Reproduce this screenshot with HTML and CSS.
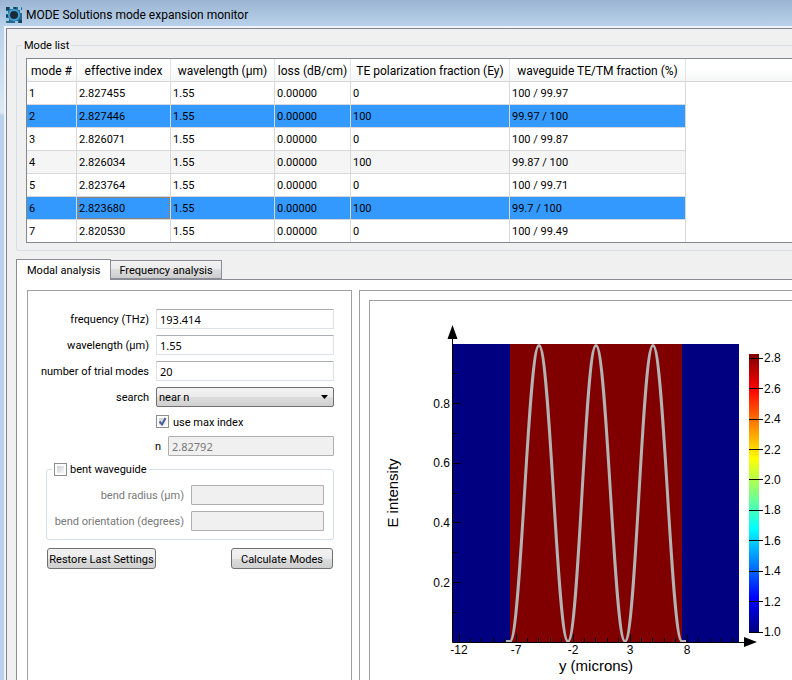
FILE: index.html
```
<!DOCTYPE html>
<html lang="en">
<head>
    <meta charset="UTF-8">
    <meta name="viewport" content="width=device-width, initial-scale=1.0">
    <title>MODE Solutions mode expansion monitor</title>
    <link rel="stylesheet" href="styles.css">
</head>
<body>
    <header class="titlebar">
        <svg class="app-icon" width="16" height="16" viewBox="0 0 16 16">
            <rect width="16" height="16" rx="1" fill="#2a6790"/>
            <path d="M0 4h2v3H0zM14 3h2v3h-2zM4 0h3v2H4zM9 14h3v2H9zM0 11h3v3H0zM12 0h3v3h-3z" fill="#9cc6e2"/>
            <path d="M0 0h3v3H0zM13 13h3v3h-3zM8 0h2v2H8zM0 8h2v2H0z" fill="#163f5c"/>
            <circle cx="8" cy="8" r="6" fill="#3fa0d2"/>
            <circle cx="8" cy="8" r="4" fill="#1b2a36"/>
        </svg>
        <span class="title-text">MODE Solutions mode expansion monitor</span>
    </header>

    <main class="window">
        <fieldset class="group mode-list">
            <legend>Mode list</legend>
            <div class="table-frame">
                <table>
                    <colgroup>
                        <col class="c-mode"><col class="c-index"><col class="c-wave"><col class="c-loss"><col class="c-te"><col class="c-wg"><col>
                    </colgroup>
                    <thead>
                        <tr><th>mode #</th><th>effective index</th><th>wavelength (µm)</th><th>loss (dB/cm)</th><th>TE polarization fraction (Ey)</th><th>waveguide TE/TM fraction (%)</th><th></th></tr>
                    </thead>
                    <tbody>
                        <tr><td>1</td><td>2.827455</td><td>1.55</td><td>0.00000</td><td>0</td><td>100 / 99.97</td><td></td></tr>
                        <tr class="selected"><td>2</td><td>2.827446</td><td>1.55</td><td>0.00000</td><td>100</td><td>99.97 / 100</td><td></td></tr>
                        <tr><td>3</td><td>2.826071</td><td>1.55</td><td>0.00000</td><td>0</td><td>100 / 99.87</td><td></td></tr>
                        <tr><td>4</td><td>2.826034</td><td>1.55</td><td>0.00000</td><td>100</td><td>99.87 / 100</td><td></td></tr>
                        <tr><td>5</td><td>2.823764</td><td>1.55</td><td>0.00000</td><td>0</td><td>100 / 99.71</td><td></td></tr>
                        <tr class="selected"><td>6</td><td class="current"><span>2.823680</span></td><td>1.55</td><td>0.00000</td><td>100</td><td>99.7 / 100</td><td></td></tr>
                        <tr><td>7</td><td>2.820530</td><td>1.55</td><td>0.00000</td><td>0</td><td>100 / 99.49</td><td></td></tr>
                    </tbody>
                </table>
            </div>
        </fieldset>

        <nav class="tabs">
            <button class="tab active" type="button">Modal analysis</button>
            <button class="tab" type="button">Frequency analysis</button>
        </nav>

        <section class="pane">
            <form class="settings">
                <div class="row">
                    <label for="frequency">frequency (THz)</label>
                    <input type="text" id="frequency" value="193.414">
                </div>
                <div class="row">
                    <label for="wavelength">wavelength (µm)</label>
                    <input type="text" id="wavelength" value="1.55">
                </div>
                <div class="row">
                    <label for="trials">number of trial modes</label>
                    <input type="text" id="trials" value="20">
                </div>
                <div class="row">
                    <label for="search">search</label>
                    <select id="search">
                        <option>near n</option>
                    </select>
                </div>
                <div class="row check-row">
                    <input type="checkbox" id="maxIndex" checked>
                    <label for="maxIndex">use max index</label>
                </div>
                <div class="row n-row">
                    <label for="n">n</label>
                    <input type="text" id="n" value="2.82792" disabled>
                </div>
                <fieldset class="group bent">
                    <legend>
                        <input type="checkbox" id="bent">
                        <label for="bent">bent waveguide</label>
                    </legend>
                    <div class="row">
                        <label for="radius">bend radius (µm)</label>
                        <input type="text" id="radius" disabled>
                    </div>
                    <div class="row">
                        <label for="orientation">bend orientation (degrees)</label>
                        <input type="text" id="orientation" disabled>
                    </div>
                </fieldset>
                <div class="actions">
                    <button type="button" class="restore">Restore Last Settings</button>
                    <button type="button" class="calculate">Calculate Modes</button>
                </div>
            </form>

            <div class="plot-panel">
                <div class="plot">
                    <svg width="422" height="378" viewBox="0 0 422 378">
                        <defs>
                            <linearGradient id="jet" x1="0" y1="0" x2="0" y2="1">
                                <stop offset="0" stop-color="#800000"/>
                                <stop offset="0.125" stop-color="#f00"/>
                                <stop offset="0.375" stop-color="#ff0"/>
                                <stop offset="0.625" stop-color="#0ff"/>
                                <stop offset="0.875" stop-color="#00f"/>
                                <stop offset="1" stop-color="#000080"/>
                            </linearGradient>
                        </defs>
                        <!-- index regions -->
                        <rect x="83" y="43" width="286" height="298" fill="#000080"/>
                        <rect x="140" y="43" width="172" height="298" fill="#800000"/>
                        <!-- E intensity -->
                        <path d="M136 340.500h4c11 0 18-296 29-296s18 296 29 296s17-296 28-296s18 296 29 296s17-296 28-296s18 296 29 296h4" fill="none" stroke="#b3b3b3" stroke-width="3"/>
                        <!-- axes -->
                        <path d="M82.500 30V341.500H376" fill="none" stroke="#000"/>
                        <path d="M82.500 24l5 14h-10zM387 341l-13-5v10z"/>
                        <path d="M83 102.500h8M83 162.500h8M83 221.500h8M83 281.500h8M83 72.500h4M83 132.500h4M83 192.500h4M83 251.500h4M83 311.500h4" stroke="#000"/>
                        <path d="M89.500 341v-8M146.500 341v-8M203.500 341v-8M260.500 341v-8M317.500 341v-8" stroke="#000"/>
                        <path d="M100.500 341v-4M111.500 341v-4M123.500 341v-4M134.500 341v-4M157.500 341v-4M168.500 341v-4M180.500 341v-4M191.500 341v-4M214.500 341v-4M225.500 341v-4M237.500 341v-4M248.500 341v-4M271.500 341v-4M282.500 341v-4M294.500 341v-4M305.500 341v-4M328.500 341v-4M340.500 341v-4M351.500 341v-4M362.500 341v-4" stroke="#000"/>
                        <!-- colour bar -->
                        <rect x="379" y="53" width="10" height="279" fill="url(#jet)"/>
                        <path d="M379 57.500h14M379 87.500h14M379 118.500h14M379 148.500h14M379 178.500h14M379 209.500h14M379 239.500h14M379 270.500h14M379 300.500h14M379 331.500h14" stroke="#000"/>
                        <g class="scale">
                            <text x="394" y="61">2.8</text>
                            <text x="394" y="92">2.6</text>
                            <text x="394" y="122">2.4</text>
                            <text x="394" y="153">2.2</text>
                            <text x="394" y="183">2.0</text>
                            <text x="394" y="213">1.8</text>
                            <text x="394" y="244">1.6</text>
                            <text x="394" y="274">1.4</text>
                            <text x="394" y="305">1.2</text>
                            <text x="394" y="335">1.0</text>
                        </g>
                        <g class="scale y-scale">
                            <text x="80" y="107">0.8</text>
                            <text x="80" y="166">0.6</text>
                            <text x="80" y="226">0.4</text>
                            <text x="80" y="286">0.2</text>
                        </g>
                        <g class="scale x-scale">
                            <text x="89" y="353">-12</text>
                            <text x="146" y="353">-7</text>
                            <text x="203" y="353">-2</text>
                            <text x="260" y="353">3</text>
                            <text x="317" y="353">8</text>
                        </g>
                        <text class="axis-title" x="226" y="370">y (microns)</text>
                        <text class="axis-title" transform="translate(28 192) rotate(-90)">E intensity</text>
                    </svg>
                </div>
            </div>
        </section>
    </main>
</body>
</html>
```
FILE: styles.css
```
* {
    box-sizing: border-box;
}
body {
    margin: 0;
    height: 100vh;
    display: flex;
    flex-direction: column;
    overflow: hidden;
    background: linear-gradient(#9ab4d2, #b9d1ea 26px, #dce9f6 112px, #b9d1ea 116px);
    font-family: Roboto, "Noto Sans", sans-serif;
    font-size: 11px;
    line-height: 14px;
    color: #000;
}
input, select, button {
    font: inherit;
    color: inherit;
    margin: 0;
}
.titlebar {
    flex: none;
    display: flex;
    align-items: center;
    gap: 4px;
    height: 26px;
    padding: 3px 6px 0;
}
.title-text {
    font-size: 12px;
}
.window {
    flex: 1;
    min-height: 0;
    display: flex;
    flex-direction: column;
    margin: 2px 0 0 6px;
    padding: 9px 0 0 9px;
    background: #f0f0f0;
    border-style: solid;
    border-color: #7f8590;
    border-width: 1px 0 0 1px;
    box-shadow: 0 0 0 2px #f0f4f9;
}
.group {
    min-width: 0;
    margin: 0;
    border: 1px solid #d5dfe5;
    border-radius: 3px;
}
.group legend {
    height: 14px;
    padding: 0 2px;
}
.mode-list {
    flex: none;
    padding: 6px 0 7px 9px;
    border-right: 0;
    border-radius: 3px 0 0 3px;
}
.mode-list legend {
    margin-left: -4px;
    line-height: 16px;
}
.table-frame {
    overflow: hidden;
    background: #fff;
    border: 1px solid #828790;
    border-right: 0;
}
table {
    width: 100%;
    table-layout: fixed;
    border-collapse: separate;
    border-spacing: 0;
}
.c-mode { width: 50px; }
.c-index { width: 94px; }
.c-wave { width: 104px; }
.c-loss { width: 76px; }
.c-te { width: 159px; }
.c-wg { width: 176px; }
th {
    height: 23px;
    padding: 2px 0 0;
    font-size: 12px;
    font-weight: normal;
    white-space: nowrap;
    background: linear-gradient(#fff 40%, #f5f6f7);
    border-right: 1px solid #e3e4e6;
    border-bottom: 1px solid #d5d5d5;
}
th:last-child {
    border-right: 0;
}
td {
    height: 23px;
    padding: 2px 2px 0;
    white-space: nowrap;
    border-right: 1px solid #d8d8d8;
    border-bottom: 1px solid #d8d8d8;
}
tbody tr:nth-child(4) td {
    background: #f5f5f5;
}
tbody tr.selected td {
    background: #3399ff;
}
tbody tr:last-child td {
    height: 22px;
    border-bottom: 0;
}
tbody tr td:last-child,
tbody tr.selected td:last-child,
tbody tr:nth-child(4) td:last-child {
    background: #fff;
    border: 0;
}
tbody td.current {
    padding: 0 0 0 1px;
}
/* dotted focus box, one pixel on, one off */
.current span {
    display: block;
    height: 22px;
    padding-left: 1px;
    line-height: 24px;
    background:
        repeating-linear-gradient(90deg, #e06c00 0 1px, transparent 1px 2px) top / 100% 1px no-repeat,
        repeating-linear-gradient(90deg, #e06c00 0 1px, transparent 1px 2px) bottom / 100% 1px no-repeat,
        repeating-linear-gradient(#e06c00 0 1px, transparent 1px 2px) left / 1px 100% no-repeat,
        repeating-linear-gradient(#e06c00 0 1px, transparent 1px 2px) right / 1px 100% no-repeat;
}
.tabs {
    flex: none;
    display: flex;
    align-items: flex-end;
    margin-top: 8px;
}
.tab {
    height: 19px;
    padding: 2px 8px 0;
    border: 1px solid #898c95;
    border-left: 0;
    background: linear-gradient(#f2f2f2, #ebebeb 50%, #dddddd 50%, #cdcdcd);
}
.tab.active {
    z-index: 1;
    height: 21px;
    margin-bottom: -1px;
    padding: 1px 10px 0;
    border-left: 1px solid #898c95;
    border-bottom: 0;
    background: #fff;
}
.pane {
    flex: 1;
    min-height: 0;
    display: flex;
    gap: 7px;
    padding: 10px 0 0 10px;
    background: #fff;
    border-top: 1px solid #898c95;
    border-left: 1px solid #898c95;
}
.settings {
    flex: none;
    width: 325px;
    display: flex;
    flex-direction: column;
    gap: 6px;
    padding: 18px 17px 0 18px;
    border: 1px solid #a0a0a0;
    border-bottom: 0;
}
.row {
    display: flex;
    align-items: center;
    justify-content: flex-end;
    gap: 7px;
}
.row label, .bent legend label {
    padding-top: 2px;
    white-space: nowrap;
}
input[type="text"], select {
    flex: none;
    width: 178px;
    height: 20px;
    border: 1px solid #dde1ea;
    border-top-color: #abadb3;
    border-radius: 1px;
    background: #fff;
}
input[type="text"] {
    padding: 1px 3px 0;
    font-family: "Noto Sans", sans-serif;
}
input[type="text"]:disabled {
    color: #787878;
    background: #f0f0f0;
    border-color: #afafaf;
}
select {
    appearance: none;
    padding: 1px 2px 0;
    border: 1px solid #707070;
    border-radius: 2px;
    background:
        url("data:image/svg+xml,%3Csvg xmlns='http://www.w3.org/2000/svg' width='7' height='4'%3E%3Cpath d='M0 0h7L3.500 4z'/%3E%3C/svg%3E") no-repeat right 5px center,
        linear-gradient(#f2f2f2, #ebebeb 50%, #dddddd 50%, #cfcfcf);
}
input[type="checkbox"] {
    appearance: none;
    flex: none;
    width: 13px;
    height: 13px;
    padding: 2px;
    border: 1px solid #8e8f8f;
    background: linear-gradient(135deg, #cbcfd5, #f6f6f6) content-box #f4f4f4;
}
input[type="checkbox"]:checked {
    background:
        url("data:image/svg+xml,%3Csvg xmlns='http://www.w3.org/2000/svg' width='9' height='9'%3E%3Cpath d='M1.500 4.500L4 7.500L7.500 1' fill='none' stroke='%234b5f9e' stroke-width='2'/%3E%3C/svg%3E") no-repeat center,
        linear-gradient(135deg, #cbcfd5, #f6f6f6) content-box #f4f4f4;
}
.check-row {
    justify-content: flex-start;
    height: 17px;
    gap: 4px;
    padding-left: 110px;
}
.n-row input[type="text"] {
    width: 166px;
}
.bent {
    display: flex;
    flex-direction: column;
    gap: 6px;
    padding: 9px 9px 8px;
}
.bent legend {
    display: flex;
    align-items: center;
    gap: 3px;
    margin-left: -4px;
}
.bent .row label {
    color: #787878;
}
.bent input[type="text"] {
    width: 133px;
}
.actions {
    display: flex;
    justify-content: space-between;
    margin-top: 2px;
    padding: 0 1px;
}
.actions button {
    height: 21px;
    padding: 2px 0 0;
    white-space: nowrap;
    border: 1px solid #707070;
    border-radius: 3px;
    background: linear-gradient(#f2f2f2, #ebebeb 50%, #dddddd 50%, #cfcfcf);
}
.restore {
    width: 109px;
}
.calculate {
    width: 102px;
}
.plot-panel {
    flex: 1;
    min-width: 0;
    display: flex;
    padding: 9px 0 0 9px;
    border: 1px solid #a0a0a0;
    border-right: 0;
    border-bottom: 0;
}
.plot {
    flex: 1;
    overflow: hidden;
    border-top: 1px solid #a0a0a0;
    border-left: 1px solid #a0a0a0;
}
.plot svg {
    display: block;
}
.plot text {
    font-family: "Liberation Sans", Arial, sans-serif;
}
.scale {
    font-size: 12px;
}
.y-scale {
    text-anchor: end;
}
.x-scale, .axis-title {
    text-anchor: middle;
}
.axis-title {
    font-size: 15px;
}
```
